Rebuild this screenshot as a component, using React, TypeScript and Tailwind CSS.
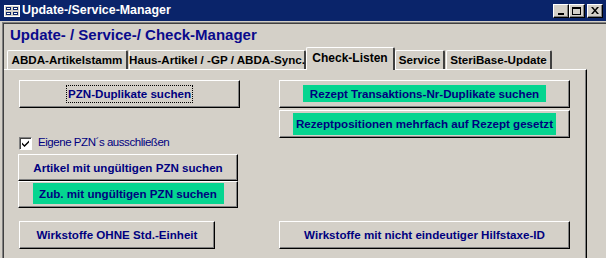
import React from 'react';

// Windows-classic raised button
const btn =
  'flex items-center justify-center whitespace-nowrap bg-[#d4d0c8] border-t border-l border-t-white border-l-white border-b border-r border-b-black border-r-black shadow-[inset_-1px_-1px_0_#808080] text-[11.6px] font-bold text-[#00007f] leading-none';

const tab =
  'flex items-center justify-center whitespace-nowrap border-t border-l border-t-white border-l-white border-r-2 border-r-[#404040] rounded-t-[2px]';

const Green: React.FC<{ w: string; h: string; children: React.ReactNode }> = ({ w, h, children }) => (
  <span className={`flex items-center justify-center bg-[#05d590] ${w} ${h}`}>{children}</span>
);

const WinBtn: React.FC<{ children: React.ReactNode }> = ({ children }) => (
  <div className="w-[16px] h-[14px] bg-[#d4d0c8] border-t border-l border-t-white border-l-white border-b border-r border-b-black border-r-black shadow-[inset_-1px_-1px_0_#808080] flex items-center justify-center">
    {children}
  </div>
);

export default function App() {
  return (
    <div
      className="w-[606px] h-[258px] bg-[#d4d0c8] overflow-hidden"
      style={{ fontFamily: '"Liberation Sans", Arial, sans-serif' }}
    >
      {/* Title bar */}
      <div className="h-[21px] bg-[#0a246a] flex items-center pl-[4px] pr-[3px]">
        <svg width="16" height="12" viewBox="0 0 16 12" className="mr-[2px]">
          <rect x="0.5" y="0.5" width="15" height="11" fill="#d4d0c8" stroke="#ffffff" />
          <rect x="2" y="2" width="5" height="3" fill="#0a246a" />
          <rect x="9" y="2" width="5" height="3" fill="#0a246a" />
          <rect x="2" y="7" width="5" height="3" fill="#0a246a" />
          <rect x="9" y="7" width="5" height="3" fill="#0a246a" />
          <rect x="3" y="3" width="3" height="1" fill="#ffffff" />
          <rect x="10" y="3" width="3" height="1" fill="#ffffff" />
          <rect x="3" y="8" width="3" height="1" fill="#ffffff" />
          <rect x="10" y="8" width="3" height="1" fill="#ffffff" />
        </svg>
        <span className="text-white font-bold text-[12.4px] leading-none">Update-/Service-Manager</span>
        <div className="ml-auto flex items-center">
          <WinBtn>
            <span className="block w-[6px] h-[2px] bg-black mt-[6px] mr-[1px]" />
          </WinBtn>
          <WinBtn>
            <span className="block w-[9px] h-[8px] border border-black border-t-2 mr-[1px]" />
          </WinBtn>
          <div className="w-[2px]" />
          <WinBtn>
            <svg width="8" height="7" viewBox="0 0 8 7" className="mr-[1px]">
              <path d="M0 0h2l2 2.5L6 0h2L5 3.5 8 7H6L4 4.5 2 7H0l3-3.5z" fill="#000" />
            </svg>
          </WinBtn>
        </div>
      </div>

      {/* Client area */}
      <div className="mt-[1px] ml-[2px] h-[236px] border-t border-l border-t-[#808080] border-l-[#808080] shadow-[inset_1px_1px_0_#404040] pl-[1px] pt-[1px]">
        <div className="pl-[6px] pt-[1px] h-[22px] text-[15px] font-bold text-[#0a0a8c] leading-[20px]">
          Update- / Service-/ Check-Manager
        </div>

        {/* Tabs */}
        <div className="flex items-end pl-[3px] h-[23px] text-[11.6px] font-bold text-black leading-none">
          <div className={`${tab} h-[19px] w-[121px]`}>ABDA-Artikelstamm</div>
          <div className={`${tab} ml-[1px] h-[19px] w-[177px]`}>Haus-Artikel / -GP / ABDA-Sync.</div>
          <div className={`${tab} h-[23px] w-[89px] -mb-[1px] relative z-10 bg-[#d4d0c8] !items-start pt-[4px] text-[12px]`}>
            Check-Listen
          </div>
          <div className={`${tab} h-[19px] w-[50px]`}>Service</div>
          <div className={`${tab} ml-[1px] h-[19px] w-[106px]`}>SteriBase-Update</div>
        </div>

        {/* Panel */}
        <div className="w-[583px] h-[200px] border-t border-t-white border-r border-r-black shadow-[inset_-1px_0_0_#808080] pl-[15px] pt-[10px]">
          <div className="flex">
            {/* left column */}
            <div className="w-[221px] flex flex-col">
              <button className={`${btn} h-[28px] w-[221px]`}>
                <span className="border border-dotted border-black px-[1px] py-[2px]">PZN-Duplikate suchen</span>
              </button>
              <label className="mt-[29px] flex items-center h-[12px] text-[11.5px] tracking-[-0.45px] text-[#00007f] leading-none font-normal whitespace-nowrap">
                <span className="w-[13px] h-[13px] bg-white border-t border-l border-t-[#808080] border-l-[#808080] border-b border-r border-b-white border-r-white shadow-[inset_1px_1px_0_#404040] flex items-center justify-center">
                  <svg width="7" height="7" viewBox="0 0 7 7">
                    <path d="M0 2.5l2.5 2.5L7 0.5v2L2.5 7 0 4.5z" fill="#000" />
                  </svg>
                </span>
                <span className="ml-[6px]">Eigene PZN´s ausschließen</span>
              </label>
              <div className="mt-[5px] -ml-[1px] flex flex-col w-[220px]">
                <button className={`${btn} h-[27px]`}>Artikel mit ungültigen PZN suchen</button>
                <button className={`${btn} h-[27px] items-start pt-[1px]`}>
                  <Green w="w-[191px]" h="h-[21px]">Zub. mit ungültigen PZN suchen</Green>
                </button>
              </div>
            </div>

            {/* right column */}
            <div className="ml-[39px] w-[291px] flex flex-col">
              <button className={`${btn} h-[28px] pb-[1px]`}>
                <Green w="w-[243px]" h="h-[17px]">Rezept Transaktions-Nr-Duplikate suchen</Green>
              </button>
              <button className={`${btn} mt-[2px] h-[28px]`}>
                <Green w="w-[263px]" h="h-[22px]">Rezeptpositionen mehrfach auf Rezept gesetzt</Green>
              </button>
            </div>
          </div>

          {/* bottom row */}
          <div className="mt-[13px] flex">
            <button className={`${btn} h-[28px] w-[196px]`}>Wirkstoffe OHNE Std.-Einheit</button>
            <button className={`${btn} h-[28px] w-[291px] ml-[64px]`}>
              Wirkstoffe mit nicht eindeutiger Hilfstaxe-ID
            </button>
          </div>
        </div>
      </div>
    </div>
  );
}
